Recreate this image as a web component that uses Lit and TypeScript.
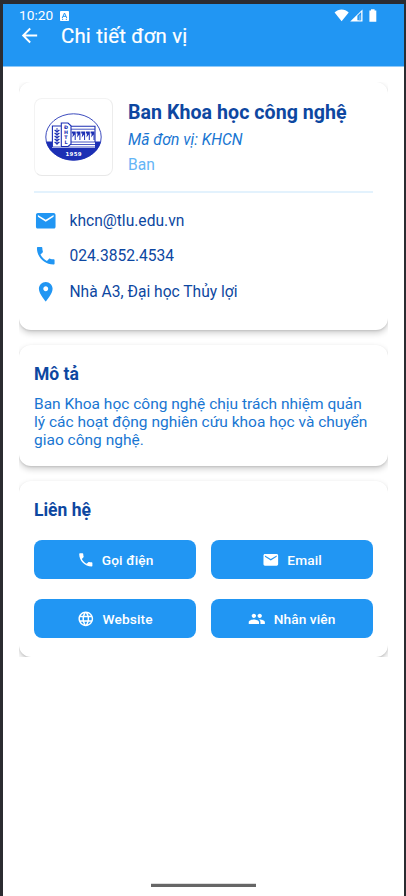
import { LitElement, html, css, svg } from "lit";
import { customElement, property } from "lit/decorators.js";

const PATHS: Record<string, string> = {
  back: "M20 11H7.83l5.59-5.59L12 4l-8 8 8 8 1.41-1.41L7.83 13H20v-2z",
  mail: "M20 4H4c-1.1 0-1.99.9-1.99 2L2 18c0 1.1.9 2 2 2h16c1.1 0 2-.9 2-2V6c0-1.1-.9-2-2-2zm0 4l-8 5-8-5V6l8 5 8-5v2z",
  phone:
    "M6.62 10.79c1.44 2.83 3.76 5.14 6.59 6.59l2.2-2.2c.27-.27.67-.36 1.02-.24 1.12.37 2.33.57 3.57.57.55 0 1 .45 1 1V20c0 .55-.45 1-1 1-9.39 0-17-7.61-17-17 0-.55.45-1 1-1h3.5c.55 0 1 .45 1 1 0 1.25.2 2.45.57 3.57.11.35.03.74-.25 1.02l-2.2 2.2z",
  place:
    "M12 2C8.13 2 5 5.13 5 9c0 5.25 7 13 7 13s7-7.75 7-13c0-3.87-3.13-7-7-7zm0 9.5c-1.38 0-2.5-1.12-2.5-2.5s1.12-2.5 2.5-2.5 2.5 1.12 2.5 2.5-1.12 2.5-2.5 2.5z",
  web: "M11.99 2C6.47 2 2 6.48 2 12s4.47 10 9.99 10C17.52 22 22 17.52 22 12S17.52 2 11.99 2zm6.93 6h-2.95c-.32-1.25-.78-2.45-1.38-3.56 1.84.63 3.37 1.91 4.33 3.56zM12 4.04c.83 1.2 1.48 2.53 1.91 3.96h-3.82c.43-1.43 1.08-2.76 1.91-3.96zM4.26 14C4.1 13.36 4 12.69 4 12s.1-1.36.26-2h3.38c-.08.66-.14 1.32-.14 2s.06 1.34.14 2H4.26zm.82 2h2.95c.32 1.25.78 2.45 1.38 3.56-1.84-.63-3.37-1.9-4.33-3.56zm2.95-8H5.08c.96-1.66 2.49-2.93 4.33-3.56C8.81 5.55 8.35 6.75 8.03 8zM12 19.96c-.83-1.2-1.48-2.53-1.91-3.96h3.82c-.43 1.43-1.08 2.76-1.91 3.96zM14.34 14H9.66c-.09-.66-.16-1.32-.16-2s.07-1.35.16-2h4.68c.09.65.16 1.32.16 2s-.07 1.34-.16 2zm.25 5.56c.6-1.11 1.06-2.31 1.38-3.56h2.95c-.96 1.65-2.49 2.93-4.33 3.56zM16.36 14c.08-.66.14-1.32.14-2s-.06-1.34-.14-2h3.38c.16.64.26 1.31.26 2s-.1 1.36-.26 2h-3.38z",
  people:
    "M16 11c1.66 0 2.99-1.34 2.99-3S17.66 5 16 5c-1.66 0-3 1.34-3 3s1.34 3 3 3zm-8 0c1.66 0 2.99-1.34 2.99-3S9.66 5 8 5C6.34 5 5 6.34 5 8s1.34 3 3 3zm0 2c-2.33 0-7 1.17-7 3.5V19h14v-2.5c0-2.33-4.67-3.5-7-3.5zm8 0c-.29 0-.62.02-.97.05 1.16.84 1.97 1.97 1.97 3.45V19h6v-2.5c0-2.33-4.67-3.5-7-3.5z",
};

@customElement("md-icon")
export class MdIcon extends LitElement {
  @property() name = "mail";
  static styles = css`
    :host { display: block; flex: none; }
    .glyph { display: block; width: 100%; height: 100%; fill: currentColor; }
  `;
  render() {
    return html`<svg class="glyph" viewBox="0 0 24 24"><path d=${PATHS[this.name]}></path></svg>`;
  }
}

@customElement("unit-logo")
export class UnitLogo extends LitElement {
  static styles = css`
    :host { display: block; width: 57px; height: 48px; }
    .logo { display: block; }
    .mark { font: 700 4.8px "DejaVu Sans", sans-serif; fill: #1c2fb4; text-anchor: middle; }
    .year { font: 700 5.4px "DejaVu Sans", sans-serif; fill: #fff; }
  `;
  render() {
    return html`<svg class="logo" width="57" height="48" viewBox="0 0 57 48">
      <defs><clipPath id="low"><rect y="28.5" width="57" height="20"></rect></clipPath></defs>
      <ellipse cx="28.5" cy="24" rx="27.7" ry="23.2" fill="#fff" stroke="#2637b5" stroke-width="0.9"></ellipse>
      <ellipse cx="28.5" cy="24" rx="28" ry="23.5" fill="#1c2fb4" clip-path="url(#low)"></ellipse>
      <path d="M7 13H16V10H23L26 12.5H50V35H7Z" fill="#fff"></path>
      <path d="M7.4 34V13H16M16.3 33V10H23L26 12.8V31L23 33.5H16M26 13.2H50V29" fill="none" stroke="#1c2fb4" stroke-width="1.1"></path>
      <path d="M26 16.2H50M26 29H50M26 31.5H50M7 34H50" stroke="#1c2fb4" stroke-width="0.8"></path>
      <path d="M12 15V32" stroke="#1c2fb4" stroke-width="0.9"></path>
      ${[17, 20, 23, 26, 29].map(
        (y) => svg`<path d=${`M12 ${y + 1.8}L9.6 ${y}M12 ${y + 1.8}L14.4 ${y}`} stroke="#1c2fb4" stroke-width="1.3"></path>`,
      )}
      ${[26.5, 31.2, 35.9, 40.6, 45.3].map(
        (x) => svg`<path d=${`M${x + 0.3} 18.6H${x + 4.2}V27H${x + 3.2}V21.4L${x + 0.8} 24.5L${x + 1.4} 20.4H${x + 0.3}Z`} fill="#1c2fb4"></path>`,
      )}
      <text class="mark" x="21" y="15.8">Đ</text>
      <text class="mark" x="21" y="20.8">H</text>
      <text class="mark" x="21" y="25.8">T</text>
      <text class="mark" x="21" y="30.8">L</text>
      <text class="year" x="20.5" y="43" textLength="16">1959</text>
    </svg>`;
  }
}

@customElement("app-root")
export class AppRoot extends LitElement {
  static styles = css`
    :host {
      display: block; box-sizing: border-box; width: 406px; height: 896px;
      padding: 4px 2px 0 3px; background: #2b2c31; overflow: hidden;
      font-family: Roboto, "Noto Sans", sans-serif; color: #0d47a1;
    }
    .screen { display: flex; flex-direction: column; height: 892px; background: #fff; }
    .top { height: 62px; flex: none; background: #2196f3; color: #fff; border-bottom: 1px solid #90caf9; }
    .status { display: flex; align-items: center; height: 23px; padding: 0 27px 0 16px; box-sizing: border-box; }
    .time { font-size: 13.7px; line-height: 23px; width: 41px; }
    .badge { display: block; margin-top: 1px; }
    .signals { display: block; margin-left: auto; }
    .bar { display: flex; align-items: center; height: 17px; }
    .back { width: 23px; height: 23px; margin-left: 15px; margin-top: -1px; }
    .title { margin-left: 20px; font-size: 20.4px; line-height: 24px; letter-spacing: 0.18px; -webkit-text-stroke: 0.2px #fff; white-space: nowrap; }
    .list {
      display: flex; flex-direction: column; gap: 15px; flex: none;
      margin: 15px 16px 0 16px; height: 575px; overflow: hidden;
    }
    .card {
      box-sizing: border-box; flex: none; border-radius: 12px; padding: 0 15px; background: #fff;
      box-shadow: 0 3px 6px rgba(0, 0, 0, 0.2), 0 1px 2px rgba(0, 0, 0, 0.1);
    }
    .unit { height: 248px; padding-top: 16px; }
    .about { height: 121px; padding-top: 18px; }
    .contact { height: 176px; padding-top: 18px; }
    .head { display: flex; height: 78px; }
    .photo {
      display: flex; align-items: center; justify-content: center; box-sizing: border-box;
      width: 79px; height: 78px; border-radius: 8px; border: 1px solid #f3f3f3; border-right-color: #ececec; border-bottom-color: #e8e8e8;
    }
    .names { margin-left: 15px; white-space: nowrap; }
    .name { font-size: 19.6px; font-weight: 700; line-height: 24px; margin-top: 3px; letter-spacing: 0.04px; }
    .code { font-size: 15.6px; font-style: italic; line-height: 20px; margin-top: 5px; color: #1976d2; }
    .kind { font-size: 15.6px; line-height: 20px; margin-top: 5px; color: #64b5f6; }
    .rule { height: 2px; margin: 15px 0 16px; background: #e3f2fd; }
    .row { display: flex; align-items: center; height: 23.5px; margin-bottom: 12px; font-size: 15.6px; white-space: nowrap; }
    .row-icon { width: 23.5px; height: 23.5px; color: #2196f3; margin: -1px 12px 0 0; }
    .heading { font-size: 17.5px; font-weight: 700; line-height: 22px; }
    .text { margin-top: 10px; font-size: 15.5px; line-height: 18.2px; color: #1976d2; white-space: nowrap; }
    .grid { display: grid; grid-template-columns: 1fr 1fr; gap: 20px 15px; margin-top: 19px; }
    .button {
      display: flex; align-items: center; justify-content: center; height: 39px; border: 0; padding: 0;
      border-radius: 8px; background: #2196f3; color: #fff;
      font: 500 13.7px Roboto, "Noto Sans", sans-serif; letter-spacing: 0.1px; white-space: nowrap;
    }
    .button-icon { width: 17.6px; height: 17.6px; margin-right: 7.6px; }
    .nav { width: 105px; height: 3px; margin: auto auto 9px 148px; background: #666; border-top: 1px solid #ddd; }
  `;

  private row(icon: string, label: string) {
    return html`<div class="row"><md-icon class="row-icon" name=${icon}></md-icon><span>${label}</span></div>`;
  }

  private button(icon: string, label: string) {
    return html`<button class="button"><md-icon class="button-icon" name=${icon}></md-icon>${label}</button>`;
  }

  render() {
    return html`<div class="screen">
      <header class="top">
        <div class="status">
          <span class="time">10:20</span>
          <svg class="badge" width="9" height="10" viewBox="0 0 9 10">
            <rect width="9" height="10" rx="0.8" fill="#fff"></rect>
            <path d="M2.2 7L4.5 2L6.8 7M3 5.3H6M2 8.3H3.2M5.8 8.3H7" fill="none" stroke="#2196f3" stroke-width="1"></path>
          </svg>
          <svg class="signals" width="43" height="13" viewBox="0 0 43 13">
            <path d="M0.6 3.6C4.5 -0.4 10.8 -0.4 14.7 3.6L7.6 12.3Z" fill="#fff"></path>
            <path d="M16.2 12.6L28.5 0.4V12.6Z" fill="#fff"></path>
            <path d="M23.4 6.8L27.2 3V11.3H23.4Z" fill="#2196f3"></path>
            <path d="M24.8 6.2H26.7V11.3H24.8Z" fill="#5fb3f6"></path>
            <path d="M35.4 1.4H37V0.3H40.6V1.4H42.3V12.7H35.4Z" fill="#fff"></path>
          </svg>
        </div>
        <div class="bar"><md-icon class="back" name="back"></md-icon><span class="title">Chi tiết đơn vị</span></div>
      </header>
      <main class="list">
        <section class="card unit">
          <div class="head">
            <div class="photo"><unit-logo></unit-logo></div>
            <div class="names">
              <div class="name">Ban Khoa học công nghệ</div>
              <div class="code">Mã đơn vị: KHCN</div>
              <div class="kind">Ban</div>
            </div>
          </div>
          <div class="rule"></div>
          ${this.row("mail", "khcn@tlu.edu.vn")} ${this.row("phone", "024.3852.4534")}
          ${this.row("place", "Nhà A3, Đại học Thủy lợi")}
        </section>
        <section class="card about">
          <div class="heading">Mô tả</div>
          <div class="text">Ban Khoa học công nghệ chịu trách nhiệm quản<br />lý các hoạt động nghiên cứu khoa học và chuyển<br />giao công nghệ.</div>
        </section>
        <section class="card contact">
          <div class="heading">Liên hệ</div>
          <div class="grid">
            ${this.button("phone", "Gọi điện")} ${this.button("mail", "Email")}
            ${this.button("web", "Website")} ${this.button("people", "Nhân viên")}
          </div>
        </section>
      </main>
      <div class="nav"></div>
    </div>`;
  }
}
